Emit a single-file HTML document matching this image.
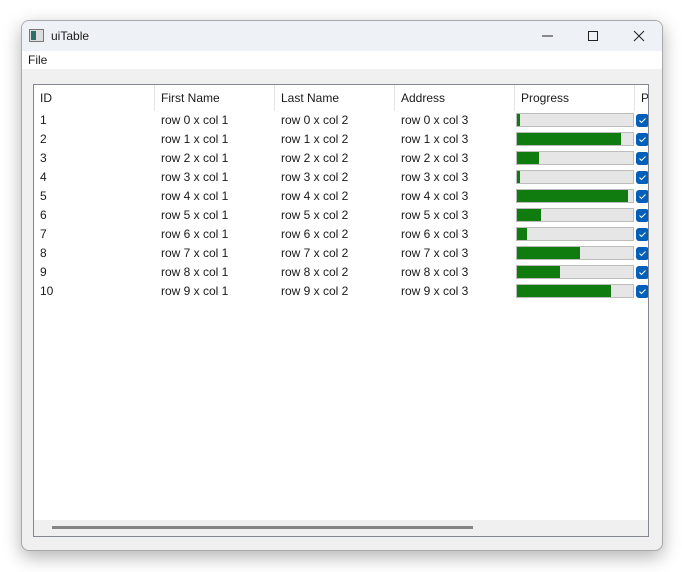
<!DOCTYPE html>
<html><head><style>
body{margin:0;width:682px;height:572px;background:#fff;position:relative;overflow:hidden;font-family:"Liberation Sans",sans-serif;font-size:12px;color:#1a1a1a}
.win{position:absolute;left:21px;top:20px;width:640px;height:529px;background:#f0f0f0;border:1px solid #a8a8a8;border-radius:8px;box-shadow:0 6px 18px rgba(0,0,0,.3);overflow:hidden}
.title{position:absolute;left:0;top:0;width:640px;height:30px;background:#eef2f6}
.menu{position:absolute;left:0;top:30px;width:640px;height:18px;background:#fff}
.tbl{position:absolute;left:11px;top:63px;width:614px;height:451px;background:#fff;border:1px solid #828790;overflow:hidden}
.hd{position:absolute;top:0;height:26px;line-height:26px;padding-left:6px;border-right:1px solid #e5e5e5;box-sizing:border-box}
.c{position:absolute;height:19px;line-height:19px}
.pb{position:absolute;width:116px;height:12px;background:#e6e6e6;border:1px solid #bcbcbc}
.pb i{position:absolute;left:0;top:0;bottom:0;background:#107c10}
.cb{position:absolute;left:602px;width:13px;height:13px;background:#005fb8;border-radius:3px}
</style></head><body>
<div class="win">
<div class="title">
<svg style="position:absolute;left:7px;top:8px" width="15" height="13"><rect x="0.5" y="0.5" width="14" height="12" fill="#ddd" stroke="#777"/><rect x="2" y="2" width="5" height="9" fill="#2b6e6a"/></svg>
<span style="position:absolute;left:29px;top:8px;font-size:12px">uiTable</span>
<svg style="position:absolute;left:520px;top:9px" width="110" height="12"><path d="M0 6h11" stroke="#222"/><rect x="46.5" y="1.5" width="9" height="9" fill="none" stroke="#222"/><path d="M92 1l10 10M102 1l-10 10" stroke="#222"/></svg>
</div>
<div class="menu"><span style="position:absolute;left:6px;top:2px">File</span></div>
<div class="tbl" id="t">
<div class="hd" style="left:0;width:121px">ID</div>
<div class="hd" style="left:121px;width:120px">First Name</div>
<div class="hd" style="left:241px;width:120px">Last Name</div>
<div class="hd" style="left:361px;width:120px">Address</div>
<div class="hd" style="left:481px;width:120px">Progress</div>
<div class="hd" style="left:601px;width:30px">P</div>
<div style="position:absolute;left:0;top:435px;width:614px;height:16px;background:#f0f0f0"><div style="position:absolute;left:18px;top:6px;width:421px;height:3px;background:#858585"></div></div>
</div>
</div>
<script>
var p=[3,90,19,3,96,21,9,54,37,81],h='';
for(var r=0;r<10;r++){var y=26+r*19;
h+='<div class="c" style="left:6px;top:'+y+'px">'+(r+1)+'</div>';
for(var c=1;c<4;c++)h+='<div class="c" style="left:'+(6+120*c+1)+'px;top:'+y+'px">row '+r+' x col '+c+'</div>';
h+='<div class="pb" style="left:482px;top:'+(y+2)+'px"><i style="width:'+p[r]+'%"></i></div>';
h+='<div class="cb" style="top:'+(y+3)+'px"><svg width="13" height="13"><path d="M3.5 6.5l2 2 4-4" stroke="#fff" fill="none" stroke-width="1"/></svg></div>';}
document.getElementById('t').insertAdjacentHTML('beforeend',h);
</script>
</body></html>
